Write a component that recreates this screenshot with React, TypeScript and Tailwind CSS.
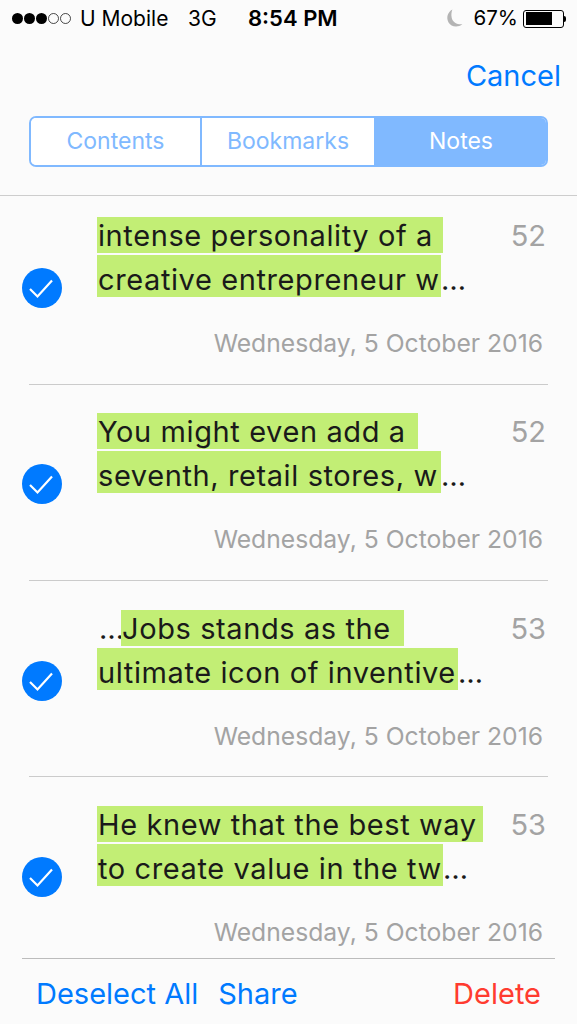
const FONT = "font-['Inter','Liberation_Sans',sans-serif]";

const notes = [
  { lead: "", first: "intense personality of a ", firstW: "w-[346px]", second: "creative entrepreneur w", secondW: "w-[344px]", tail: "…", page: "52" },
  { lead: "", first: "You might even add a ", firstW: "w-[321px]", second: "seventh, retail stores, w", secondW: "w-[344px]", tail: "…", page: "52" },
  { lead: "…", first: "Jobs stands as the ", firstW: "w-[283px]", second: "ultimate icon of inventive", secondW: "w-[361px]", tail: "…", page: "53" },
  { lead: "", first: "He knew that the best way", firstW: "w-[386px]", second: "to create value in the tw", secondW: "w-[346px]", tail: "…", page: "53" },
];

function CheckCircle() {
  return (
    <svg width="40" height="40" viewBox="0 0 40 40" className="shrink-0">
      <circle cx="20" cy="20" r="20" fill="#007aff" />
      <path d="M8 21 L15.5 28.5 L30 12.5" fill="none" stroke="#fff" strokeWidth="2.2" />
    </svg>
  );
}

function Moon() {
  return (
    <svg width="17" height="19" viewBox="0 0 16 18">
      <path d="M6 0.5 C1.5 3 0 8 2.2 12.5 C4.6 17 11 18 15.5 14.5 C10.5 15 6.5 12.5 5.4 8.5 C4.8 5.8 5 3 6 0.5 Z" fill="#b4b4b4" />
    </svg>
  );
}

function Battery() {
  return (
    <div className="flex items-center">
      <div className="h-[18px] w-[41px] rounded-[3px] border border-black p-[1.5px]">
        <div className="h-full w-[26px] bg-black" />
      </div>
      <div className="h-[6px] w-[2px] rounded-r-sm bg-black" />
    </div>
  );
}

function Dots() {
  return (
    <div className="flex w-[60px] items-center gap-[1px]">
      {[0, 1, 2].map((i) => (
        <div key={i} className="h-[11px] w-[11px] rounded-full bg-black" />
      ))}
      {[0, 1].map((i) => (
        <div key={i} className="h-[11px] w-[11px] rounded-full border border-black/70" />
      ))}
    </div>
  );
}

function NoteRow({ note, last }: { note: (typeof notes)[number]; last: boolean }) {
  return (
    <div className="relative h-[196.33px] pl-[21.5px]">
      <div className="flex pt-[21px]">
        <div className="pt-[51px]">
          <CheckCircle />
        </div>
        <div className="ml-[35.5px] w-[420px] text-[29px] leading-[38px] tracking-[0.6px] text-[#1a1a1a]">
          <div className="flex h-[38px]">
            {note.lead && <span className="w-[24px] pl-[2px] tracking-normal">{note.lead}</span>}
            <span className={`${note.firstW} h-[36px] shrink-0 whitespace-pre bg-[#c2ee75] pl-[1px]`}>{note.first}</span>
          </div>
          <div className="mt-[6px] flex h-[38px]">
            <span className={`${note.secondW} -mt-[6px] h-[42px] shrink-0 whitespace-pre bg-[#c2ee75] pl-[1px] pt-[6px]`}>{note.second}</span>
            <span className="tracking-normal">{note.tail}</span>
          </div>
        </div>
        <div className="ml-auto pr-[31px] text-[29px] leading-[38px] text-[#a3a3a3]">{note.page}</div>
      </div>
      <div className="mt-[19px] pr-[34px] text-right text-[24.7px] leading-[32px] text-[#a3a3a3]">
        Wednesday, 5 October 2016
      </div>
      {!last && <div className="absolute bottom-[7.6px] left-[29px] right-[29px] h-px bg-[#cbcbcb]" />}
    </div>
  );
}

export default function App() {
  return (
    <div className={`${FONT} flex h-[1024px] w-[577px] flex-col overflow-hidden bg-[#fbfbfb]`}>
      <div className="flex h-[37px] items-center pl-[12px] pr-[11px] text-[21px] text-black">
        <Dots />
        <span className="ml-[8px] w-[98px]">U Mobile</span>
        <span className="ml-[10px] w-[60px]">3G</span>
        <span className="text-[22px] font-semibold">8:54 PM</span>
        <div className="ml-auto flex items-center gap-[11px]">
          <Moon />
          <div className="flex items-center gap-[5px]">
            <span className="text-[20.5px]">67%</span>
            <Battery />
          </div>
        </div>
      </div>

      <div className="flex h-[42px] items-start justify-end pr-[16px] pt-[20px]">
        <span className="text-[29px] leading-[38px] text-[#007aff]">Cancel</span>
      </div>

      <div className="mx-[29px] mt-[37px] flex h-[51px] overflow-hidden rounded-[7px] border-2 border-[#80b9ff] text-[23px]">
        <div className="flex w-[171px] items-center justify-center border-r-2 border-[#80b9ff] bg-white text-[#80b9ff]">Contents</div>
        <div className="flex w-[172px] items-center justify-center bg-white text-[#80b9ff]">Bookmarks</div>
        <div className="flex flex-1 items-center justify-center bg-[#80b9ff] pl-[2px] text-white">Notes</div>
      </div>

      <div className="mt-[28px] h-[1px] bg-[#cdcdcd]" />

      <div className="h-[762px] overflow-hidden">
        {notes.map((note, i) => (
          <NoteRow key={i} note={note} last={i === notes.length - 1} />
        ))}
      </div>

      <div className="ml-[22px] mr-[22px] h-px bg-[#bcbcbc]" />

      <div className="flex flex-1 items-center px-[36px] pt-[4px] text-[29px]">
        <span className="text-[#007aff]">Deselect All</span>
        <span className="ml-[20px] text-[#007aff]">Share</span>
        <span className="ml-auto text-[#ff3b30]">Delete</span>
      </div>
    </div>
  );
}
